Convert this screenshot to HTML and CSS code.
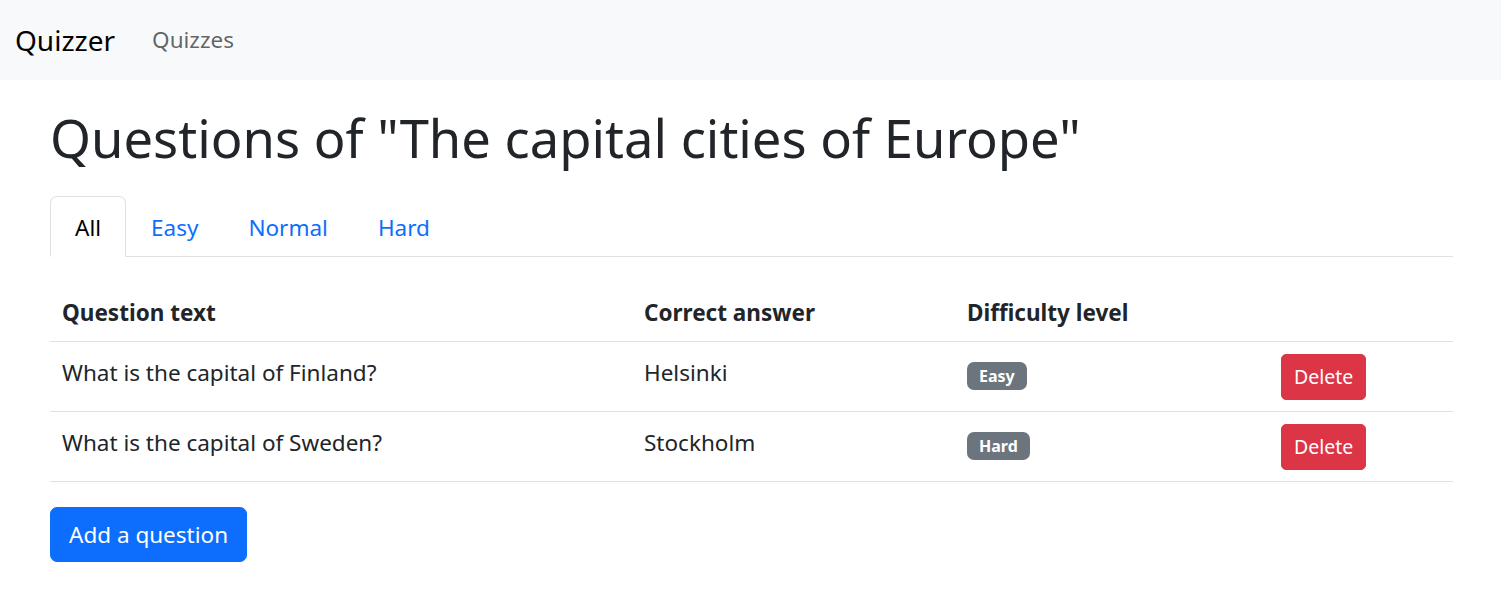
FILE: index.html
```html
<!DOCTYPE html>
<html lang="en">
<head>
<meta charset="utf-8">
<title>Quizzer</title>
<link rel="stylesheet" href="styles.css">
</head>
<body>
<nav class="navbar">
  <a class="brand" href="#">Quizzer</a>
  <a class="nav-item" href="#">Quizzes</a>
</nav>
<main class="main">
  <h1 class="title">Questions of "The capital cities of Europe"</h1>
  <ul class="tabs">
    <li><a class="tab active" href="#">All</a></li>
    <li><a class="tab" href="#">Easy</a></li>
    <li><a class="tab" href="#">Normal</a></li>
    <li><a class="tab" href="#">Hard</a></li>
  </ul>
  <table class="qtable">
    <colgroup>
      <col class="c1"><col class="c2"><col class="c3"><col class="c4">
    </colgroup>
    <thead>
      <tr><th>Question text</th><th>Correct answer</th><th>Difficulty level</th><th></th></tr>
    </thead>
    <tbody>
      <tr>
        <td>What is the capital of Finland?</td>
        <td>Helsinki</td>
        <td class="cell-badge"><span class="badge">Easy</span></td>
        <td class="cell-btn"><button class="btn btn-danger">Delete</button></td>
      </tr>
      <tr>
        <td>What is the capital of Sweden?</td>
        <td>Stockholm</td>
        <td class="cell-badge"><span class="badge">Hard</span></td>
        <td class="cell-btn"><button class="btn btn-danger">Delete</button></td>
      </tr>
    </tbody>
  </table>
  <button class="btn btn-primary">Add a question</button>
</main>
</body>
</html>
```

FILE: styles.css
```css
* { box-sizing: border-box; }
body {
  margin: 0;
  font-family: "Noto Sans", "Open Sans", sans-serif;
  font-size: 22.5px;
  line-height: 34px;
  color: #212529;
  background: #fff;
}
a { text-decoration: none; }
.navbar {
  height: 80px;
  background: #f8f9fa;
  display: flex;
  align-items: center;
  padding-left: 15px;
}
.brand {
  font-size: 28px;
  color: #000;
  margin-right: 37px;
}
.nav-item {
  font-size: 22.5px;
  color: rgba(0,0,0,.62);
}
.main {
  padding: 0 48px 0 50px;
}
.title {
  font-size: 52.5px;
  font-weight: 400;
  line-height: 62px;
  margin: 27px 0 27px;
}
.tabs {
  list-style: none;
  margin: 0;
  padding: 0;
  display: flex;
  border-bottom: 1px solid #dee2e6;
}
.tab {
  display: block;
  padding: 14px 24px 11px;
  border: 1px solid transparent;
  border-top-left-radius: 7px;
  border-top-right-radius: 7px;
  margin-bottom: -1px;
  color: #0d6efd;
  line-height: 34px;
}
.tab.active {
  color: #000;
  border-color: #dee2e6 #dee2e6 #fff;
  background: #fff;
}
.qtable {
  width: 100%;
  border-collapse: collapse;
  margin-top: 20px;
  margin-bottom: 25px;
}
.c1 { width: 582px; }
.c2 { width: 323px; }
.c3 { width: 314px; }
.qtable th, .qtable td {
  text-align: left;
  border-bottom: 1px solid #dee2e6;
  vertical-align: top;
}
.qtable th {
  font-weight: 700;
  padding: 19px 12px 11px;
}
.qtable td { padding: 14px 12px 21px; }
.qtable td.cell-badge { padding-top: 20px; padding-bottom: 15px; }
.qtable td.cell-btn { padding-top: 12px; padding-bottom: 11px; }
.badge {
  display: inline-block;
  vertical-align: top;
  background: #6c757d;
  color: #fff;
  font-size: 16px;
  font-weight: 700;
  line-height: 18px;
  padding: 5px 12px;
  border-radius: 7px;
}
.btn {
  font-family: inherit;
  border: 1px solid transparent;
  color: #fff;
  cursor: pointer;
  vertical-align: top;
}
.btn-danger {
  background: #dc3545;
  border-color: #dc3545;
  font-size: 19.5px;
  line-height: 30px;
  padding: 7px 12px;
  border-radius: 5px;
}
.btn-primary {
  background: #0d6efd;
  border-color: #0d6efd;
  font-size: 22.5px;
  line-height: 35px;
  padding: 9px 18px;
  border-radius: 7px;
}
```
